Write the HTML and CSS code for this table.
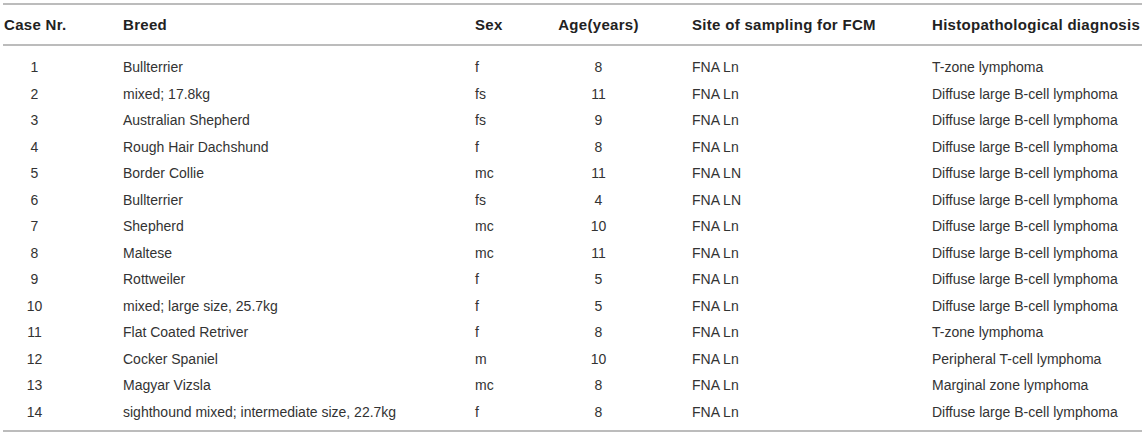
FILE: index.html
```html
<!DOCTYPE html>
<html lang="en">
<head>
  <meta charset="UTF-8" />
  <title>Case overview</title>
  <link rel="stylesheet" href="styles.css">
</head>
<body>
  <table class="cases">
    <colgroup>
      <col class="c-nr">
      <col class="c-breed">
      <col class="c-sex">
      <col class="c-age">
      <col class="c-site">
      <col class="c-diag">
    </colgroup>
    <thead>
      <tr>
        <th class="nr">Case Nr.</th>
        <th>Breed</th>
        <th>Sex</th>
        <th class="age">Age(years)</th>
        <th>Site of sampling for FCM</th>
        <th>Histopathological diagnosis</th>
      </tr>
    </thead>
    <tbody>
      <tr><td class="nr">1</td><td>Bullterrier</td><td>f</td><td class="age">8</td><td>FNA Ln</td><td>T-zone lymphoma</td></tr>
      <tr><td class="nr">2</td><td>mixed; 17.8kg</td><td>fs</td><td class="age">11</td><td>FNA Ln</td><td>Diffuse large B-cell lymphoma</td></tr>
      <tr><td class="nr">3</td><td>Australian Shepherd</td><td>fs</td><td class="age">9</td><td>FNA Ln</td><td>Diffuse large B-cell lymphoma</td></tr>
      <tr><td class="nr">4</td><td>Rough Hair Dachshund</td><td>f</td><td class="age">8</td><td>FNA Ln</td><td>Diffuse large B-cell lymphoma</td></tr>
      <tr><td class="nr">5</td><td>Border Collie</td><td>mc</td><td class="age">11</td><td>FNA LN</td><td>Diffuse large B-cell lymphoma</td></tr>
      <tr><td class="nr">6</td><td>Bullterrier</td><td>fs</td><td class="age">4</td><td>FNA LN</td><td>Diffuse large B-cell lymphoma</td></tr>
      <tr><td class="nr">7</td><td>Shepherd</td><td>mc</td><td class="age">10</td><td>FNA Ln</td><td>Diffuse large B-cell lymphoma</td></tr>
      <tr><td class="nr">8</td><td>Maltese</td><td>mc</td><td class="age">11</td><td>FNA Ln</td><td>Diffuse large B-cell lymphoma</td></tr>
      <tr><td class="nr">9</td><td>Rottweiler</td><td>f</td><td class="age">5</td><td>FNA Ln</td><td>Diffuse large B-cell lymphoma</td></tr>
      <tr><td class="nr">10</td><td>mixed; large size, 25.7kg</td><td>f</td><td class="age">5</td><td>FNA Ln</td><td>Diffuse large B-cell lymphoma</td></tr>
      <tr><td class="nr">11</td><td>Flat Coated Retriver</td><td>f</td><td class="age">8</td><td>FNA Ln</td><td>T-zone lymphoma</td></tr>
      <tr><td class="nr">12</td><td>Cocker Spaniel</td><td>m</td><td class="age">10</td><td>FNA Ln</td><td>Peripheral T-cell lymphoma</td></tr>
      <tr><td class="nr">13</td><td>Magyar Vizsla</td><td>mc</td><td class="age">8</td><td>FNA Ln</td><td>Marginal zone lymphoma</td></tr>
      <tr><td class="nr">14</td><td>sighthound mixed; intermediate size, 22.7kg</td><td>f</td><td class="age">8</td><td>FNA Ln</td><td>Diffuse large B-cell lymphoma</td></tr>
    </tbody>
  </table>
</body>
</html>
```

FILE: styles.css
```css
body {
  margin: 0;
  padding: 3px 3px 0 3px;
  background: #ffffff;
  font-family: "Liberation Sans", Arial, sans-serif;
  color: #333333;
}

.cases {
  width: 1139px;
  table-layout: fixed;
  border-collapse: collapse;
  border-top: 2px solid #bcbcbc;
  border-bottom: 2px solid #bcbcbc;
}

.c-nr { width: 120px; }
.c-breed { width: 352px; }
.c-sex { width: 82px; }
.c-age { width: 135px; }
.c-site { width: 240px; }
.c-diag { width: 210px; }

.cases th {
  height: 39px;
  padding: 0;
  text-align: left;
  font-size: 15px;
  letter-spacing: 0.3px;
  font-weight: bold;
  color: #222222;
  border-bottom: 2px solid #bcbcbc;
  white-space: nowrap;
}

.cases td {
  height: 26.5px;
  padding: 0;
  font-size: 14px;
  white-space: nowrap;
}

.cases tbody tr:first-child td {
  padding-top: 8px;
}

.cases tbody tr:last-child td {
  padding-bottom: 5px;
}

.cases .nr {
  text-align: center;
  padding-left: 1px;
  padding-right: 58px;
}

.cases .age {
  text-align: center;
  padding-right: 52px;
}
```
